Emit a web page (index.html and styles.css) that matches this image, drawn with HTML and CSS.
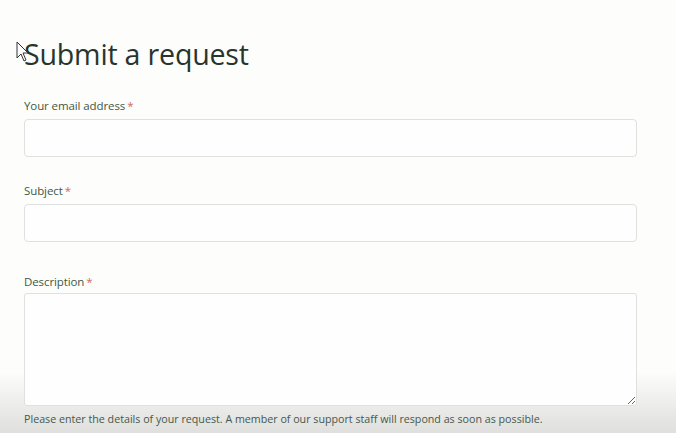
FILE: index.html
```html
<!DOCTYPE html>
<html>
<head>
<meta charset="utf-8">
<link rel="stylesheet" href="styles.css">
</head>
<body>
<main class="page">
  <h1 class="title">Submit a request</h1>
  <form class="form">
    <div class="field">
      <label class="label">Your email address<span class="req">*</span></label>
      <input class="input" type="text">
    </div>
    <div class="field">
      <label class="label">Subject<span class="req">*</span></label>
      <input class="input" type="text">
    </div>
    <div class="field field-desc">
      <label class="label">Description<span class="req">*</span></label>
      <textarea class="textarea"></textarea>
      <p class="hint">Please enter the details of your request. A member of our support staff will respond as soon as possible.</p>
    </div>
  </form>
</main>
<svg class="cursor" width="14" height="22" viewBox="0 0 14 22">
  <path d="M1 1 L1 17 L5 13 L8 20 L10 19 L7 12 L12 12 Z" fill="#fff" stroke="#333" stroke-width="1"/>
</svg>
</body>
</html>
```
FILE: styles.css
```css
html, body {
  margin: 0;
  padding: 0;
  height: 433px;
  overflow: hidden;
}
body {
  font-family: "Open Sans", "Noto Sans", sans-serif;
  position: relative;
  background: linear-gradient(to bottom, #fdfdfc 0, #fdfdfc 372px, #ececea 405px, #dfdfdd 433px);
}
.page {
  width: 613px;
  padding: 32px 0 0 24px;
}
.title {
  margin: 0;
  font-weight: 400;
  font-size: 28.6px;
  line-height: 44px;
  color: #28352d;
  letter-spacing: -0.2px;
}
.form {
  margin-top: 21px;
}
.field {
  display: flex;
  flex-direction: column;
  margin-bottom: 25px;
}
.label {
  font-size: 11.5px;
  line-height: 17px;
  letter-spacing: -0.1px;
  color: #3d5a40;
  margin-bottom: 5px;
}
.req {
  color: #cf6a5e;
  margin-left: 2px;
}
.input {
  box-sizing: border-box;
  height: 38px;
  width: 100%;
  margin: 0;
  border: 1px solid #e0e0df;
  border-radius: 4px;
  background: #fefefe;
}
.field-desc .label {
  margin-top: 6px;
  margin-bottom: 3px;
}
.textarea {
  box-sizing: border-box;
  height: 113px;
  width: 100%;
  margin: 0;
  border: 1px solid #e0e0df;
  border-radius: 3px;
  background: #fefefe;
  resize: vertical;
}
.hint {
  margin: 4px 0 0;
  font-size: 10.7px;
  line-height: 18px;
  color: #46584a;
}
.cursor {
  position: absolute;
  left: 16px;
  top: 41px;
}
```
